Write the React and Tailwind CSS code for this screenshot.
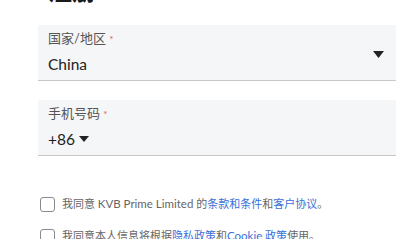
export default function App() {
  const font = { fontFamily: 'Lato, "Noto Sans CJK SC", sans-serif' };
  return (
    <div className="w-[420px] h-[239px] overflow-hidden bg-white" style={font}>
      <div className="pl-[38px] pr-[24px]">
        {/* Title, scrolled mostly out of view */}
        <h1 className="-mt-[25px] text-[24px] leading-[32px] font-bold text-[#1a1a1a] pl-[10px]">注册</h1>

        {/* Country */}
        <div className="mt-[18px] h-[56px] bg-[#f5f6f8] border-b border-[#c8c8c8] pl-[10px] pr-[12px] flex items-center justify-between">
          <div className="flex flex-col -mt-[2px]">
            <span className="text-[13px] leading-[18px] text-[#555]">
              国家/地区 <span className="text-[#e06060] text-[10px]">*</span>
            </span>
            <span className="text-[15.5px] leading-[22px] text-[#222] mt-[5px]">China</span>
          </div>
          <svg width="11" height="7" viewBox="0 0 11 7" className="mt-[4px]">
            <path d="M0 0H11L5.5 7Z" fill="#222" />
          </svg>
        </div>

        {/* Phone */}
        <div className="mt-[19px] h-[56px] bg-[#f5f6f8] border-b border-[#c8c8c8] pl-[10px] flex items-center">
          <div className="flex flex-col -mt-[2px]">
            <span className="text-[13px] leading-[18px] text-[#555]">
              手机号码 <span className="text-[#e06060] text-[10px]">*</span>
            </span>
            <span className="text-[15.5px] leading-[22px] text-[#222] mt-[5px] flex items-center gap-[4px]">
              +86
              <svg width="10" height="6" viewBox="0 0 10 6">
                <path d="M0 0H10L5 6Z" fill="#222" />
              </svg>
            </span>
          </div>
        </div>

        {/* Agreements */}
        <div className="mt-[40px] flex flex-col gap-[16px] pl-[2px]">
          <label className="flex items-center gap-[7px] text-[11px] leading-[16px] text-[#666]">
            <span className="w-[15px] h-[15px] border-[1.5px] border-[#8a8a8a] rounded-[3px] shrink-0" />
            <span>
              我同意 <span className="text-[11.5px]">KVB Prime Limited</span> 的<span className="text-[#3a6fd8]">条款和条件</span>和<span className="text-[#3a6fd8]">客户协议</span>。
            </span>
          </label>
          <label className="flex items-center gap-[7px] text-[11px] leading-[16px] text-[#666]">
            <span className="w-[15px] h-[15px] border-[1.5px] border-[#8a8a8a] rounded-[3px] shrink-0" />
            <span>
              我同意本人信息将根据<span className="text-[#3a6fd8]">隐私政策</span>和<span className="text-[#3a6fd8]"><span className="text-[11.5px]">Cookie</span> 政策</span>使用。
            </span>
          </label>
        </div>
      </div>
    </div>
  );
}
